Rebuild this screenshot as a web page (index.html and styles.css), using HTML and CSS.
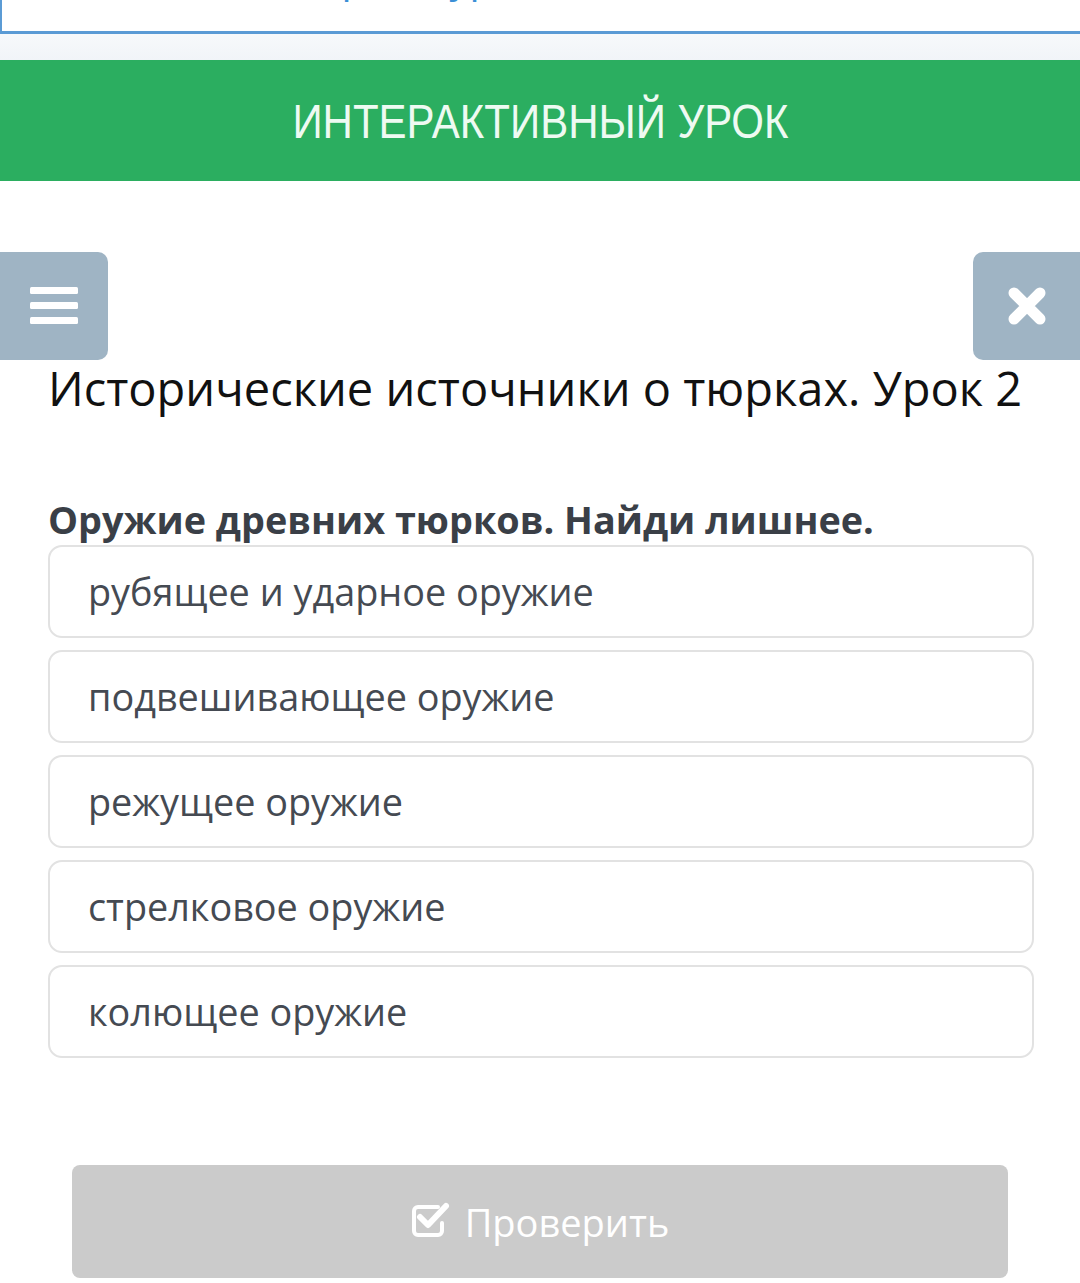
FILE: index.html
```html
<!DOCTYPE html>
<html lang="ru">
<head>
<meta charset="utf-8">
<link rel="stylesheet" href="styles.css">
</head>
<body>
<div class="topbox"><span class="toplink">Открыть урок в новом окне</span></div>
<div class="band"></div>
<header class="hero"><span class="hero-text">ИНТЕРАКТИВНЫЙ УРОК</span></header>
<div class="tools">
  <button class="tool" aria-label="menu">
    <svg width="48" height="40" viewBox="0 0 48 40"><rect x="0" y="1" width="48" height="7" rx="1.5" fill="#fff"/><rect x="0" y="16" width="48" height="7" rx="1.5" fill="#fff"/><rect x="0" y="31" width="48" height="7" rx="1.5" fill="#fff"/></svg>
  </button>
  <button class="tool" aria-label="close">
    <svg width="42" height="42" viewBox="0 0 42 42"><path d="M8 8 L34 34 M34 8 L8 34" stroke="#fff" stroke-width="11" stroke-linecap="round"/></svg>
  </button>
</div>
<h1 class="title">Исторические источники о тюрках. Урок 2</h1>
<section class="quiz">
  <h2 class="question">Оружие древних тюрков. Найди лишнее.</h2>
  <div class="options">
    <div class="option">рубящее и ударное оружие</div>
    <div class="option">подвешивающее оружие</div>
    <div class="option">режущее оружие</div>
    <div class="option">стрелковое оружие</div>
    <div class="option">колющее оружие</div>
  </div>
  <div class="check-wrap">
    <button class="check">
      <svg width="40" height="36" viewBox="0 0 40 36"><path d="M27 5 H7 a4 4 0 0 0 -4 4 v20 a4 4 0 0 0 4 4 h20 a4 4 0 0 0 4 -4 v-8" fill="none" stroke="#fff" stroke-width="4" stroke-linecap="round"/><path d="M9 15 L17 23 L35 4" fill="none" stroke="#fff" stroke-width="6" stroke-linecap="round" stroke-linejoin="round"/></svg>
      <span>Проверить</span>
    </button>
  </div>
</section>
</body>
</html>
```
FILE: styles.css
```css
* { box-sizing: border-box; }
html, body { margin: 0; padding: 0; background: #fff; }
body { font-family: "Open Sans", "Noto Sans", sans-serif; width: 1080px; overflow: hidden; }

.topbox {
  height: 34px;
  border-left: 2px solid #5b9bd5;
  border-bottom: 3px solid #5b9bd5;
  background: #fff;
  overflow: hidden;
  display: flex;
  justify-content: center;
}
.toplink {
  font-size: 40px;
  line-height: 40px;
  color: #3b8fd6;
  margin-top: -43px;
  white-space: nowrap;
}
.band {
  height: 26px;
  background: linear-gradient(#f7f9fb, #f1f4f8);
}
.hero {
  height: 121px;
  background: #2bae60;
  display: flex;
  align-items: center;
  justify-content: center;
}
.hero-text {
  display: inline-block;
  font-family: "Liberation Sans", Arial, sans-serif;
  font-size: 48px;
  color: #eefaf2;
  transform: scaleX(0.875);
  margin-top: 2px;
}

.tools {
  display: flex;
  justify-content: space-between;
  margin-top: 71px;
}
.tool {
  width: 108px;
  height: 108px;
  border: 0;
  padding: 0;
  background: #9fb4c4;
  border-radius: 0 10px 10px 0;
  display: flex;
  align-items: center;
  justify-content: center;
}
.tool:last-child { width: 107px; border-radius: 10px 0 0 10px; }

.title {
  margin: 0;
  padding: 0 0 0 48px;
  font-weight: 400;
  font-size: 47px;
  line-height: 56px;
  color: #111;
  white-space: nowrap;
}

.quiz { padding: 0 46px 0 48px; }
.question {
  margin: 79px 0 0;
  font-size: 37.8px;
  font-weight: 700;
  line-height: 50px;
  color: #3a3f47;
}
.options {
  display: flex;
  flex-direction: column;
  gap: 12px;
  margin-top: 0;
}
.option {
  height: 93px;
  border: 2px solid #e2e2e2;
  border-radius: 14px;
  padding: 0 0 0 38px;
  display: flex;
  align-items: center;
  font-size: 37.8px;
  color: #454a52;
}
.check-wrap {
  display: flex;
  justify-content: center;
  margin-top: 107px;
  margin-left: -48px;
  margin-right: -46px;
}
.check {
  width: 936px;
  height: 113px;
  border: 0;
  border-radius: 8px;
  background: #cbcbcb;
  color: #fff;
  font-family: "Open Sans", sans-serif;
  font-size: 38px;
  display: flex;
  align-items: center;
  justify-content: center;
  gap: 14px;
}
.check svg { margin-top: -4px; }
```
